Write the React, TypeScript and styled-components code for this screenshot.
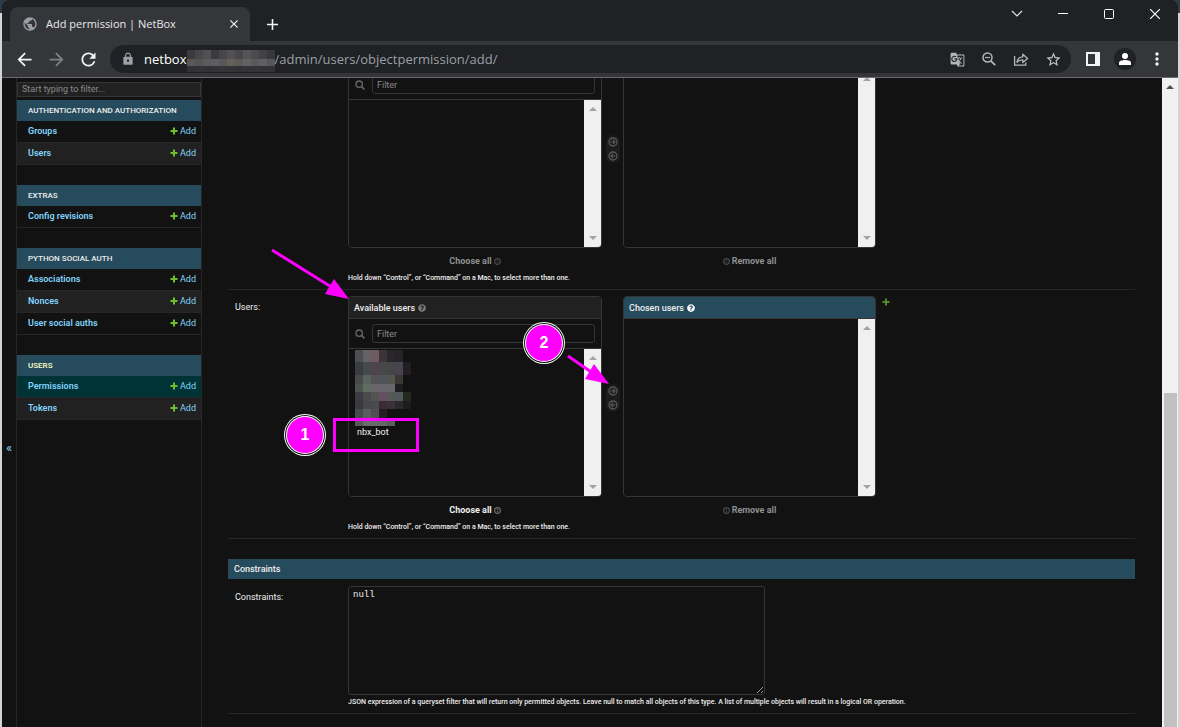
import React from "react";
import styled, { createGlobalStyle } from "styled-components";
import {
  MdAdd,
  MdArrowBack,
  MdArrowForward,
  MdClose,
  MdGTranslate,
  MdLock,
  MdMoreVert,
  MdPublic,
  MdRefresh,
  MdStarBorder,
} from "react-icons/md";
import { FaQuestionCircle } from "react-icons/fa";

const c = {
  strip: "#202124",
  toolbar: "#35363a",
  page: "#121212",
  alt: "#212121",
  line: "#272727",
  border: "#353535",
  primary: "#264b5d",
  link: "#81d4fa",
  text: "#eeeeee",
  muted: "#8f8f8f",
  green: "#70bf2b",
  mark: "#ff00ff",
};

const GlobalStyle = createGlobalStyle`
  *, *::before, *::after { box-sizing: border-box; }
  body {
    margin: 0;
    background: #d0d0d0;
    font-family: Roboto, "Liberation Sans", sans-serif;
    font-size: 9px;
    color: ${c.text};
  }
  button, input, select, textarea { font: inherit; color: inherit; }
  button { background: none; border: 0; padding: 0; cursor: pointer; }
  a { color: ${c.link}; text-decoration: none; }
  svg { display: block; flex: none; }
`;

/* ---------- browser window ---------- */

const Desktop = styled.div`
  height: 100vh;
  padding: 0 2px;
  background: linear-gradient(#2c3b47 13px, #d4d4d4 13px);
`;

const Window = styled.div`
  position: relative;
  height: 100%;
  display: flex;
  flex-direction: column;
  overflow: hidden;
  border-radius: 8px 8px 0 0;
  background: ${c.page};
`;

const TabStrip = styled.div`
  display: flex;
  align-items: flex-end;
  height: 41px;
  padding-left: 8px;
  background: ${c.strip};
  font-family: "Open Sans", "Noto Sans", sans-serif;
`;

const Tab = styled.div`
  display: flex;
  align-items: center;
  width: 240px;
  height: 34px;
  padding: 0 8px 0 12px;
  border-radius: 8px 8px 0 0;
  background: ${c.toolbar};
  color: #9aa0a6;
`;

const TabTitle = styled.span`
  flex: 1;
  margin-left: 8px;
  font-size: 11px;
  line-height: 16px;
  color: #e8eaed;
  white-space: nowrap;
`;

const IconButton = styled.button<{ $w?: number; $color?: string }>`
  display: flex;
  align-items: center;
  justify-content: center;
  width: ${(p) => p.$w ?? 32}px;
  height: 28px;
  flex: none;
  color: ${(p) => p.$color ?? "#f1f3f4"};
`;

const NewTab = styled(IconButton)`
  height: 34px;
  margin-left: 6px;
`;

const WindowControls = styled.div`
  display: flex;
  align-self: flex-start;
  margin-left: auto;
`;

const Toolbar = styled.div`
  display: flex;
  align-items: center;
  height: 37px;
  padding: 0 5px 0 6px;
  background: ${c.toolbar};
  border-bottom: 1px solid #6a6b6e;
`;

const Omnibox = styled.div`
  flex: 1;
  display: flex;
  align-items: center;
  min-width: 0;
  height: 28px;
  margin: 0 6px;
  padding: 0 2px 0 11px;
  border-radius: 14px;
  background: ${c.strip};
  color: #9aa0a6;
  font-family: "Open Sans", "Noto Sans", sans-serif;
  font-size: 13px;
  line-height: 20px;
  white-space: nowrap;
`;

const Host = styled.span`
  margin-left: 9px;
  color: #ffffff;
`;

const Path = styled.span`
  flex: 1;
`;

const Avatar = styled.span`
  display: flex;
  align-items: center;
  justify-content: center;
  width: 22px;
  height: 22px;
  border-radius: 50%;
  background: ${c.strip};
`;

const Viewport = styled.div`
  flex: 1;
  min-height: 0;
  display: flex;
  overflow: hidden;
`;

/* ---------- sidebar ---------- */

const ToggleNav = styled.button`
  width: 14px;
  flex: none;
  padding-top: 90px;
  color: ${c.link};
  font-size: 13px;
`;

const Sidebar = styled.nav`
  width: 186px;
  flex: none;
  padding-top: 4px;
  border: solid ${c.line};
  border-width: 0 1px;
`;

const NavFilter = styled.input`
  display: block;
  width: 100%;
  height: 15px;
  margin-bottom: 3px;
  padding: 0 4px 1px;
  border: 1px solid ${c.border};
  background: ${c.alt};
  font-size: 9px;
  &::placeholder { color: #8a8a8a; opacity: 1; }
`;

const Module = styled.table`
  width: 100%;
  margin-bottom: 20px;
  border-collapse: collapse;
`;

const ModuleCaption = styled.caption<{ $current?: boolean }>`
  height: 21px;
  padding-left: 11px;
  background: ${c.primary};
  color: ${(p) => (p.$current ? "#ffffcc" : c.text)};
  font-size: 8px;
  font-weight: 500;
  line-height: 21px;
  text-align: left;
`;

const ModelRow = styled.tr<{ $current?: boolean }>`
  height: 22px;
  background: ${(p) => (p.$current ? "#003336" : "transparent")};
  box-shadow: inset 0 -1px ${c.line};
  &:nth-child(even) { background: ${c.alt}; }
`;

const ModelName = styled.th`
  padding: 0 0 3px 11px;
  text-align: left;
  font-weight: 600;
`;

const ModelAdd = styled.td`
  padding: 0 5px 3px 0;
`;

const AddLink = styled.a`
  display: flex;
  align-items: center;
  justify-content: flex-end;
  gap: 2px;
`;

/* ---------- form ---------- */

const Main = styled.main`
  flex: 1;
  min-width: 0;
  padding: 0 27px 0 26px;
`;

const Form = styled.form`
  margin-top: -15px;
`;

const Row = styled.div`
  display: flex;
  padding: 6px 0 7px;
  border-bottom: 1px solid ${c.line};
`;

const RowLabel = styled.label`
  width: 120px;
  flex: none;
  padding: 5px 0 0 7px;
  line-height: 12px;
`;

const Selector = styled.div`
  display: grid;
  grid-template-columns: 254px 21px 253px;
`;

const Box = styled.div`
  display: flex;
  flex-direction: column;
  border: 1px solid ${c.border};
  border-radius: 4px;
  overflow: hidden;
`;

const BoxTitle = styled.h2<{ $primary?: boolean }>`
  display: flex;
  align-items: center;
  gap: 3px;
  height: 22px;
  margin: 0;
  padding-left: 5px;
  border-bottom: 1px solid ${c.border};
  background: ${(p) => (p.$primary ? c.primary : c.alt)};
  font-size: 9px;
  font-weight: 500;
  svg { color: ${(p) => (p.$primary ? "#ffffff" : "#7a7a7a")}; }
`;

const FilterBar = styled.label`
  display: flex;
  align-items: center;
  gap: 7px;
  height: 30px;
  padding: 0 6px;
  border-bottom: 1px solid ${c.border};
`;

const FilterInput = styled.input`
  flex: 1;
  min-width: 0;
  height: 19px;
  padding: 0 4px;
  border: 1px solid ${c.border};
  border-radius: 3px;
  background: ${c.page};
  &::placeholder { color: #8a8a8a; opacity: 1; }
`;

const ListArea = styled.div`
  position: relative;
  flex: 1;
  display: flex;
  min-height: 147px;
`;

const List = styled.select<{ $masked?: boolean }>`
  flex: 1;
  min-width: 0;
  padding: ${(p) => (p.$masked ? 78 : 0)}px 0 0 6px;
  border: 0;
  outline: 0;
  background: ${c.page};
  overflow: hidden;
  option { padding: 0 2px; line-height: 14px; min-height: 14px; }
`;

const ListScroll = styled.div`
  display: flex;
  flex-direction: column;
  align-items: center;
  justify-content: space-between;
  width: 17px;
  padding: 7px 0;
  background: #f0f0f0;
`;

const Masked = styled.svg`
  position: absolute;
  left: 6px;
  top: 1px;
`;

const Chooser = styled.div`
  justify-self: center;
  align-self: end;
  display: flex;
  flex-direction: column;
  gap: 4px;
  margin-bottom: 85px;
  padding: 2px;
  border-radius: 7px;
  background: #1c1c1c;
`;

const BulkButton = styled.button<{ $active?: boolean }>`
  justify-self: center;
  display: flex;
  align-items: center;
  gap: 2px;
  height: 26px;
  color: ${(p) => (p.$active ? c.text : c.muted)};
  font-weight: 700;
`;

const Help = styled.p`
  margin: 0;
  font-size: 7px;
  font-weight: 500;
  line-height: 8px;
`;

const AddAnother = styled.a`
  margin: 2px 0 0 6px;
`;

const GroupTitle = styled.h2`
  height: 21px;
  margin: 20px 0 0;
  padding-left: 6px;
  border-bottom: 1px solid ${c.page};
  background: ${c.primary};
  background-clip: padding-box;
  font-size: 9px;
  font-weight: 500;
  line-height: 20px;
`;

const JsonField = styled.textarea`
  display: block;
  width: 417px;
  height: 109px;
  margin-bottom: 3px;
  padding: 3px 4px;
  border: 1px solid ${c.border};
  border-radius: 3px;
  outline: 0;
  background: ${c.page};
  font-family: "Liberation Mono", monospace;
  font-size: 9px;
  line-height: 10px;
`;

/* ---------- page scrollbar ---------- */

const PageScroll = styled.div`
  display: flex;
  flex-direction: column;
  align-items: center;
  width: 16px;
  flex: none;
  padding-top: 7px;
  background: #f1f1f1;
`;

const PageThumb = styled.div`
  width: 13px;
  height: 52%;
  margin-top: auto;
  background: #c1c1c1;
`;

/* ---------- annotations laid over the window ---------- */

const Arrows = styled.svg`
  position: absolute;
  left: 0;
  top: 0;
  pointer-events: none;
`;

const Highlight = styled.div`
  position: absolute;
  left: 331px;
  top: 418px;
  width: 86px;
  height: 34px;
  border: 3px solid ${c.mark};
  pointer-events: none;
`;

const Badge = styled.div<{ $x: number; $y: number }>`
  position: absolute;
  left: ${(p) => p.$x}px;
  top: ${(p) => p.$y}px;
  width: 36px;
  height: 36px;
  border-radius: 50%;
  background: ${c.mark};
  box-shadow: 0 0 0 1px #ffffff, 0 0 0 2px #111111, 0 0 0 3px #ffffff;
  color: #ffffff;
  font-family: "Liberation Sans", Arial, sans-serif;
  font-size: 16px;
  font-weight: 700;
  line-height: 35px;
  text-align: center;
`;

/* ---------- drawings ---------- */

const Plus = ({ color = c.green, size = 8 }: { color?: string; size?: number }) => (
  <svg width={size} height={size} viewBox="0 0 8 8">
    <path d="M3 0.5h2v2.5h2.5v2H5v2.5H3V5H.5V3H3z" fill={color} />
  </svg>
);

const Triangle = ({ down, color = "#a3a3a3" }: { down?: boolean; color?: string }) => (
  <svg width="8" height="4" viewBox="0 0 8 4">
    <path d={down ? "M0 0h8L4 4z" : "M0 4h8L4 0z"} fill={color} />
  </svg>
);

const SearchIcon = () => (
  <svg width="10" height="10" viewBox="0 0 10 10" fill="none" stroke="#666666">
    <circle cx="4.2" cy="4.2" r="3.2" strokeWidth="1.3" />
    <path d="M6.6 6.6l2.8 2.8" strokeWidth="1.6" />
  </svg>
);

const CircleArrow = ({ left }: { left?: boolean }) => (
  <svg width="10" height="10" viewBox="0 0 10 10" fill="none" stroke="#585858">
    <circle cx="5" cy="5" r="4" strokeWidth="1.3" />
    <path d={left ? "M7.500 5H3M5 3L3 5l2 2" : "M2.500 5H7M5 3l2 2-2 2"} strokeWidth="1.2" />
  </svg>
);

const CircleChevron = ({ left, color = "#4a4a4a" }: { left?: boolean; color?: string }) => (
  <svg width="7" height="7" viewBox="0 0 7 7" fill="none" stroke={color}>
    <circle cx="3.5" cy="3.5" r="2.9" strokeWidth="1.1" />
    <path d={left ? "M4.200 2L2.700 3.500 4.200 5" : "M2.800 2l1.500 1.500L2.800 5"} strokeWidth="1" />
  </svg>
);

const hostMask = [
  ["#3b3b3d", "#47474a", "#505050", "#3b3b3d", "#474749", "#525254", "#474749", "#555556", "#4b4b4d", "#434345", "#38383b"],
  ["#58585b", "#545457", "#5b5b5c", "#5e5e61", "#58585b", "#626059", "#5c5c55", "#626265", "#5a5a5c", "#606062", "#57575a"],
  ["#323236", "#333337", "#323236", "#333337", "#343438", "#333337", "#323236", "#343438", "#333337", "#323236", "#333337"],
];

const nameMask: [number, number, string[]][] = [
  [0, 12, ["#4e4e50", "#666164", "#70595f", "#3b3535", "#29272d", "#252429"]],
  [12, 13, ["#3a3c40", "#444949", "#51434b", "#464949", "#454648", "#494350", "#201e21"]],
  [25, 9, ["#464a4c", "#5a625e", "#545457", "#4d545a", "#55544f", "#3b3832"]],
  [34, 8, ["#4c5452", "#606b61", "#68656a", "#68646c", "#69656d", "#1d1c1f"]],
  [42, 9, ["#3a3c41", "#494c49", "#535553", "#664f60", "#565857", "#50595a", "#272722"]],
  [51, 8, ["#383a3e", "#474849", "#494a4b", "#3a2c34", "#393239", "#2c292d", "#1d1c1f"]],
  [59, 9, ["#484b4e", "#5d5c5e", "#544e54", "#251f21"]],
  [68, 8, ["#575a5a", "#6a6b6a", "#68696a", "#656a69", "#5b5f5e"]],
];

const MaskedNames = () => (
  <Masked width="57" height="76" shapeRendering="crispEdges">
    {nameMask.map(([y, h, cells]) =>
      cells.map((fill, i) => <rect key={`${y}-${i}`} x={i * 8} y={y} width="8" height={h} fill={fill} />)
    )}
  </Masked>
);

/* ---------- parts ---------- */

const modules = [
  { title: "AUTHENTICATION AND AUTHORIZATION", models: ["Groups", "Users"] },
  { title: "EXTRAS", models: ["Config revisions"] },
  { title: "PYTHON SOCIAL AUTH", models: ["Associations", "Nonces", "User social auths"] },
  { title: "USERS", models: ["Permissions", "Tokens"], current: "Permissions" },
];

const Listbox = ({ label, id, options = [], masked }: { label: string; id?: string; options?: string[]; masked?: boolean }) => (
  <ListArea>
    <List multiple aria-label={label} id={id} $masked={masked}>
      {options.map((o) => (
        <option key={o}>{o}</option>
      ))}
    </List>
    {masked && <MaskedNames />}
    <ListScroll>
      <Triangle />
      <Triangle down />
    </ListScroll>
  </ListArea>
);

const SelectorField = ({ name, id, titled, options }: { name: string; id: string; titled?: boolean; options?: string[] }) => (
  <div>
    <Selector>
      <Box>
        {titled && (
          <BoxTitle>
            Available {name} <FaQuestionCircle size={8} />
          </BoxTitle>
        )}
        <FilterBar>
          <SearchIcon />
          <FilterInput placeholder="Filter" aria-label={`Filter ${name}`} />
        </FilterBar>
        <Listbox label={`Available ${name}`} id={id} options={options} masked={!!options} />
      </Box>
      <Chooser>
        <button type="button" aria-label="Choose">
          <CircleArrow />
        </button>
        <button type="button" aria-label="Remove">
          <CircleArrow left />
        </button>
      </Chooser>
      <Box>
        {titled && (
          <BoxTitle $primary>
            Chosen {name} <FaQuestionCircle size={8} />
          </BoxTitle>
        )}
        <Listbox label={`Chosen ${name}`} />
      </Box>
      <BulkButton type="button" $active={titled}>
        Choose all <CircleChevron color={titled ? "#707070" : undefined} />
      </BulkButton>
      <span />
      <BulkButton type="button">
        <CircleChevron left /> Remove all
      </BulkButton>
    </Selector>
    <Help>Hold down “Control”, or “Command” on a Mac, to select more than one.</Help>
  </div>
);

export default function App() {
  return (
    <Desktop>
      <GlobalStyle />
      <Window>
        <TabStrip>
          <Tab>
            <MdPublic size={16} />
            <TabTitle>Add permission | NetBox</TabTitle>
            <IconButton $w={16} aria-label="Close tab">
              <MdClose size={14} />
            </IconButton>
          </Tab>
          <NewTab aria-label="New tab">
            <MdAdd size={19} />
          </NewTab>
          <WindowControls>
            <IconButton $w={46} aria-label="Search tabs">
              <svg width="12" height="10" fill="none" stroke="#e0e0e0" strokeWidth="1.2">
                <path d="M1 2l5 5 5-5" />
              </svg>
            </IconButton>
            <IconButton $w={46} aria-label="Minimize">
              <svg width="10" height="10" stroke="#fff">
                <path d="M0 4.500h10" />
              </svg>
            </IconButton>
            <IconButton $w={46} aria-label="Maximize">
              <svg width="10" height="10" fill="none" stroke="#fff">
                <rect x=".5" y=".5" width="9" height="9" rx="1" />
              </svg>
            </IconButton>
            <IconButton $w={46} aria-label="Close">
              <svg width="10" height="10" stroke="#fff" strokeWidth="1.200">
                <path d="M0 0l10 10M10 0L0 10" />
              </svg>
            </IconButton>
          </WindowControls>
        </TabStrip>

        <Toolbar>
          <IconButton aria-label="Back">
            <MdArrowBack size={21} />
          </IconButton>
          <IconButton aria-label="Forward" $color="#7e8083">
            <MdArrowForward size={21} />
          </IconButton>
          <IconButton aria-label="Reload">
            <MdRefresh size={21} />
          </IconButton>
          <Omnibox>
            <MdLock size={14} />
            <Host>netbox</Host>
            <svg width="88" height="26" shapeRendering="crispEdges">
              {hostMask.map((cells, r) =>
                cells.map((fill, i) => (
                  <rect key={`${r}-${i}`} x={i * 8} y={[4, 13, 17][r]} width="8" height={r === 0 ? 9 : r === 1 ? 8 : 9} fill={fill} />
                ))
              )}
              {hostMask[1].map((fill, i) => (
                <rect key={i} x={i * 8} y={13} width="8" height="7" fill={fill} />
              ))}
            </svg>
            <Path>/admin/users/objectpermission/add/</Path>
            <IconButton aria-label="Translate" $color="#b4b7ba">
              <MdGTranslate size={15} />
            </IconButton>
            <IconButton aria-label="Zoom" $color="#b4b7ba">
              <svg width="14" height="14" viewBox="0 0 14 14" fill="none" stroke="currentColor">
                <circle cx="5.500" cy="5.500" r="4.500" strokeWidth="1.500" />
                <path d="M8.800 8.800l4.400 4.400" strokeWidth="1.800" />
                <path d="M3 5.500h5" strokeWidth="1.200" />
              </svg>
            </IconButton>
            <IconButton aria-label="Share" $color="#b4b7ba">
              <svg width="16" height="16" viewBox="0 0 16 16" fill="none" stroke="currentColor" strokeWidth="1.300">
                <path d="M1.600 5v9.200h11.200V11.400" />
                <path d="M4 11.200c.6-3.600 2.600-5.200 5.800-5.300V3.200L14.600 7.400 9.800 11.500V8.800C7.400 8.800 5.500 9.500 4 11.200z" strokeLinejoin="round" />
              </svg>
            </IconButton>
            <IconButton aria-label="Bookmark" $color="#c4c7ca">
              <MdStarBorder size={17} />
            </IconButton>
          </Omnibox>
          <IconButton aria-label="Side panel">
            <svg width="14" height="14">
              <path d="M0 0h14v14H0zM2 2v10h7V2z" fill="currentColor" fillRule="evenodd" />
            </svg>
          </IconButton>
          <IconButton aria-label="Profile">
            <Avatar>
              <svg width="12" height="12" fill="#fff">
                <circle cx="6" cy="3" r="3" />
                <path d="M0 12V9.800C0 8 3 7 6 7s6 1 6 2.800V12z" />
              </svg>
            </Avatar>
          </IconButton>
          <IconButton aria-label="Menu">
            <MdMoreVert size={20} />
          </IconButton>
        </Toolbar>

        <Viewport>
          <ToggleNav aria-label="Toggle navigation">«</ToggleNav>
          <Sidebar>
            <NavFilter placeholder="Start typing to filter..." aria-label="Filter navigation items" />
            {modules.map((m) => (
              <Module key={m.title}>
                <ModuleCaption $current={!!m.current}>{m.title}</ModuleCaption>
                <tbody>
                  {m.models.map((name) => (
                    <ModelRow key={name} $current={m.current === name}>
                      <ModelName scope="row">
                        <a href="#model">{name}</a>
                      </ModelName>
                      <ModelAdd>
                        <AddLink href="#add">
                          <Plus /> Add
                        </AddLink>
                      </ModelAdd>
                    </ModelRow>
                  ))}
                </tbody>
              </Module>
            ))}
          </Sidebar>

          <Main>
            <Form>
              <Row>
                <RowLabel as="div" />
                <SelectorField name="groups" id="groups" />
              </Row>
              <Row>
                <RowLabel htmlFor="users">Users:</RowLabel>
                <SelectorField name="users" id="users" titled options={["nbx_bot"]} />
                <AddAnother href="#add-user" aria-label="Add another user">
                  <Plus color="#4f8a26" />
                </AddAnother>
              </Row>
              <GroupTitle>Constraints</GroupTitle>
              <Row>
                <RowLabel htmlFor="constraints">Constraints:</RowLabel>
                <div>
                  <JsonField id="constraints" defaultValue="null" />
                  <Help>
                    JSON expression of a queryset filter that will return only permitted objects. Leave null to match
                    all objects of this type. A list of multiple objects will result in a logical OR operation.
                  </Help>
                </div>
              </Row>
            </Form>
          </Main>

          <PageScroll>
            <Triangle color="#505050" />
            <PageThumb />
          </PageScroll>
        </Viewport>

        <Arrows width="620" height="400" fill={c.mark} stroke={c.mark}>
          <path d="M270 250l61 38M566 356l26 18" strokeWidth="3" />
          <path d="M347 299l-24-5 9-15zM607 384l-24-5 9-15z" stroke="none" />
        </Arrows>
        <Highlight />
        <Badge $x={285} $y={417}>1</Badge>
        <Badge $x={524} $y={325}>2</Badge>
      </Window>
    </Desktop>
  );
}
